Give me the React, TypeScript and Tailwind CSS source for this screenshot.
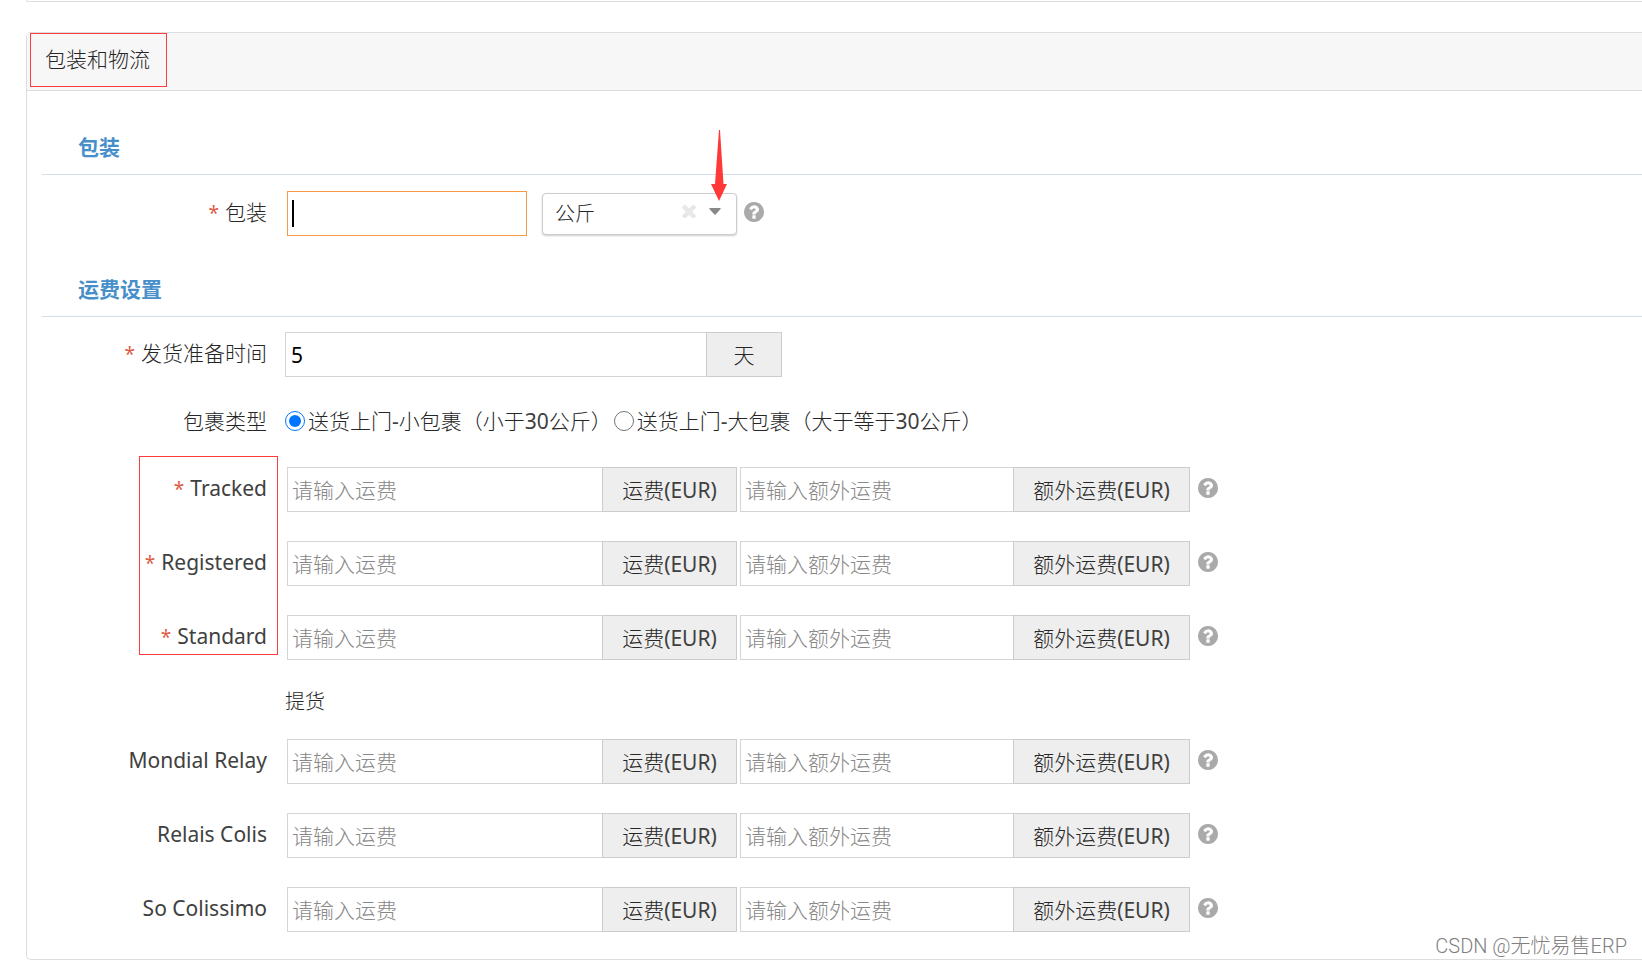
import React from "react";

const FONT =
  "font-['Noto_Sans','Noto_Sans_CJK_SC',sans-serif] text-[21px] text-[#262626]";

function HelpButton({ about }: { about: string }) {
  return (
    <button type="button" aria-label={about} className="h-5 w-5 shrink-0 text-[#aaa]">
      <svg viewBox="128 128 1536 1536" className="h-5 w-5" fill="currentColor">
        <path d="M1024 1376v-192q0-14-9-23t-23-9h-192q-14 0-23 9t-9 23v192q0 14 9 23t23 9h192q14 0 23-9t9-23zm256-672q0-88-55.5-163t-138.5-116-170-41q-243 0-371 213-15 24 8 42l132 100q7 6 19 6 16 0 25-12 53-68 86-92 34-24 86-24 48 0 85.5 26t37.5 59q0 38-20 61t-68 45q-63 28-115.5 86.5t-52.5 125.5v36q0 14 9 23t23 9h192q14 0 23-9t9-23q0-19 21.5-49.5t54.5-49.5q32-18 49-28.5t46-35 44.5-48 28-60.5 12.5-81zm384 192q0 209-103 385.5t-279.5 279.5-385.5 103-385.5-103-279.5-279.5-103-385.5 103-385.5 279.5-279.5 385.5-103 385.5 103 279.5 279.5 103 385.5z" />
      </svg>
    </button>
  );
}

function Latin({ children }: { children: React.ReactNode }) {
  return <span className="font-normal text-[#404040]">{children}</span>;
}

function RowLabel({ id, required, children }: { id?: string; required?: boolean; children: React.ReactNode }) {
  return (
    <label htmlFor={id} className="w-[225px] shrink-0 text-right leading-[42px] whitespace-nowrap">
      {required && <span className="mr-[6px] text-[19px] font-normal text-[#dd5a43]">*</span>}
      {children}
    </label>
  );
}

function SectionTitle({ children }: { children: React.ReactNode }) {
  return (
    <h3 className="border-b border-[#cfe0ec] pb-3 pl-9 font-bold leading-[30px] text-[#478fca]">
      {children}
    </h3>
  );
}

function Group({
  id,
  placeholder,
  addon,
  addonClass,
  label,
}: {
  id: string;
  placeholder: string;
  addon: string;
  addonClass: string;
  label?: string;
}) {
  return (
    <div className="flex h-[45px] min-w-0 max-w-[450px] flex-1">
      <input
        id={id}
        aria-label={label}
        placeholder={placeholder}
        className="min-w-0 flex-1 border border-r-0 border-[#d5d5d5] px-1 pt-[2px] font-light placeholder:text-[#888] placeholder:opacity-100"
      />
      <span className={`shrink-0 border border-[#ccc] bg-[#eee] text-center leading-[45px] ${addonClass}`}>
        {addon}
        <Latin>(EUR)</Latin>
      </span>
    </div>
  );
}

function FeeRow({ name, required }: { name: string; required?: boolean }) {
  const id = name.toLowerCase().replace(" ", "-");
  return (
    <div className="flex items-start">
      <RowLabel id={id} required={required}>
        <Latin>{name}</Latin>
      </RowLabel>
      <div className="ml-5 flex min-w-0 flex-1 gap-[3px]">
        <Group id={id} placeholder="请输入运费" addon="运费" addonClass="w-[135px]" />
        <Group
          id={`${id}-extra`}
          label={`${name} 额外运费`}
          placeholder="请输入额外运费"
          addon="额外运费"
          addonClass="w-[177px]"
        />
        <div className="ml-[5px] flex h-[42px] items-center">
          <HelpButton about={`${name} 说明`} />
        </div>
      </div>
    </div>
  );
}

export default function App() {
  return (
    <div className={`overflow-x-hidden bg-white pl-[26px] font-light ${FONT}`}>
      <div className="h-[2px] rounded-bl border-b border-l border-[#ddd]" />
      <section className="mt-[30px] rounded-l-[5px] border border-r-0 border-[#ddd]">
        <header className="border-b border-[#ddd] bg-[#f7f7f7] pb-[3px] pl-[3px]">
          <h2 className="w-fit border border-[#ff3b3b] pb-[2px] pl-[14px] pr-4 leading-[50px]">包装和物流</h2>
        </header>
        <div className="pb-[27px] pl-[15px] pt-[41px]">
          <SectionTitle>包装</SectionTitle>
          <div className="mt-4 flex items-start">
            <RowLabel id="weight" required>包装</RowLabel>
            <div className="relative ml-5 h-[45px] w-60">
              <input id="weight" className="h-full w-full border border-[#f59942] px-1 caret-transparent outline-none" />
              <span className="pointer-events-none absolute left-[5px] top-[9px] h-[27px] w-[2px] bg-black" />
            </div>
            <div className="relative ml-[15px] mt-[2px] h-[42px] w-[195px]">
              <select
                aria-label="重量单位"
                className="h-full w-full appearance-none rounded border border-[#ccc] bg-white px-3 text-xl text-[#262626] shadow-[0_1px_2px_rgba(0,0,0,0.2)]"
              >
                <option>公斤</option>
              </select>
              <svg viewBox="302 302 1188 1188" className="pointer-events-none absolute left-[140px] top-[11px] h-[14px] w-[14px]" fill="#e8e8e8">
                <path d="M1490 1322q0 40-28 68l-136 136q-28 28-68 28t-68-28l-294-294-294 294q-28 28-68 28t-68-28l-136-136q-28-28-28-68t28-68l294-294-294-294q-28-28-28-68t28-68l136-136q28-28 68-28t68 28l294 294 294-294q28-28 68-28t68 28l136 136q28 28 28 68t-28 68l-294 294 294 294q28 28 28 68z" />
              </svg>
              <svg viewBox="0 0 12 7" className="pointer-events-none absolute left-[167px] top-[15px] h-[7px] w-3" fill="#888">
                <path d="M1 0h10q1 0 .6 1L6.6 6.500q-.6.6-1.200 0L.4 1Q0 0 1 0z" />
              </svg>
              <svg viewBox="0 0 16 71" className="pointer-events-none absolute -top-[63px] left-[169px] h-[71px] w-4" fill="#ff3838">
                <path d="M8 0h1l3.500 54H16L8 71 0 54h4z" />
              </svg>
            </div>
            <div className="ml-[7px] flex h-[42px] items-center">
              <HelpButton about="包装 说明" />
            </div>
          </div>

          <div className="mt-[38px]">
            <SectionTitle>运费设置</SectionTitle>
          </div>
          <div className="mt-[15px] flex items-start">
            <RowLabel id="prepare" required>发货准备时间</RowLabel>
            <div className="ml-[18px] flex h-[45px] min-w-0 max-w-[497px] flex-1">
              <input id="prepare" defaultValue="5" className="min-w-0 flex-1 border border-r-0 border-[#d5d5d5] px-[5px] pt-[2px] font-normal text-black" />
              <span className="w-[76px] border border-[#ccc] bg-[#eee] text-center leading-[45px]">天</span>
            </div>
          </div>

          <div role="radiogroup" aria-label="包裹类型" className="mt-[23px] flex items-start">
            <span className="w-[225px] shrink-0 text-right leading-[42px]">包裹类型</span>
            <div className="ml-[18px] flex h-[42px] items-center whitespace-nowrap leading-[42px]">
              <input id="small" type="radio" name="parcel" defaultChecked className="mr-[3px] h-5 w-5 accent-[#0075ff]" />
              <label htmlFor="small">
                送货上门<Latin>-</Latin>小包裹（小于<Latin>30</Latin>公斤）
              </label>
              <input id="large" type="radio" name="parcel" className="ml-[2px] mr-[3px] h-5 w-5" />
              <label htmlFor="large">
                送货上门<Latin>-</Latin>大包裹（大于等于<Latin>30</Latin>公斤）
              </label>
            </div>
          </div>

          <div className="relative mt-[25px] flex flex-col gap-[29px]">
            <FeeRow name="Tracked" required />
            <FeeRow name="Registered" required />
            <FeeRow name="Standard" required />
            <div className="pointer-events-none absolute -top-[11px] left-[97px] h-[199px] w-[139px] border border-[#ff3b3b]" />
          </div>

          <p className="ml-[243px] mt-[22px] text-xl leading-10">提货</p>

          <div className="mt-[17px] flex flex-col gap-[29px]">
            <FeeRow name="Mondial Relay" />
            <FeeRow name="Relais Colis" />
            <FeeRow name="So Colissimo" />
          </div>
        </div>
      </section>
      <p className="absolute right-[15px] top-[932px] font-['Roboto','Noto_Sans_CJK_SC',sans-serif] text-xl leading-7 text-[#808080]">
        CSDN @无忧易售ERP
      </p>
    </div>
  );
}
